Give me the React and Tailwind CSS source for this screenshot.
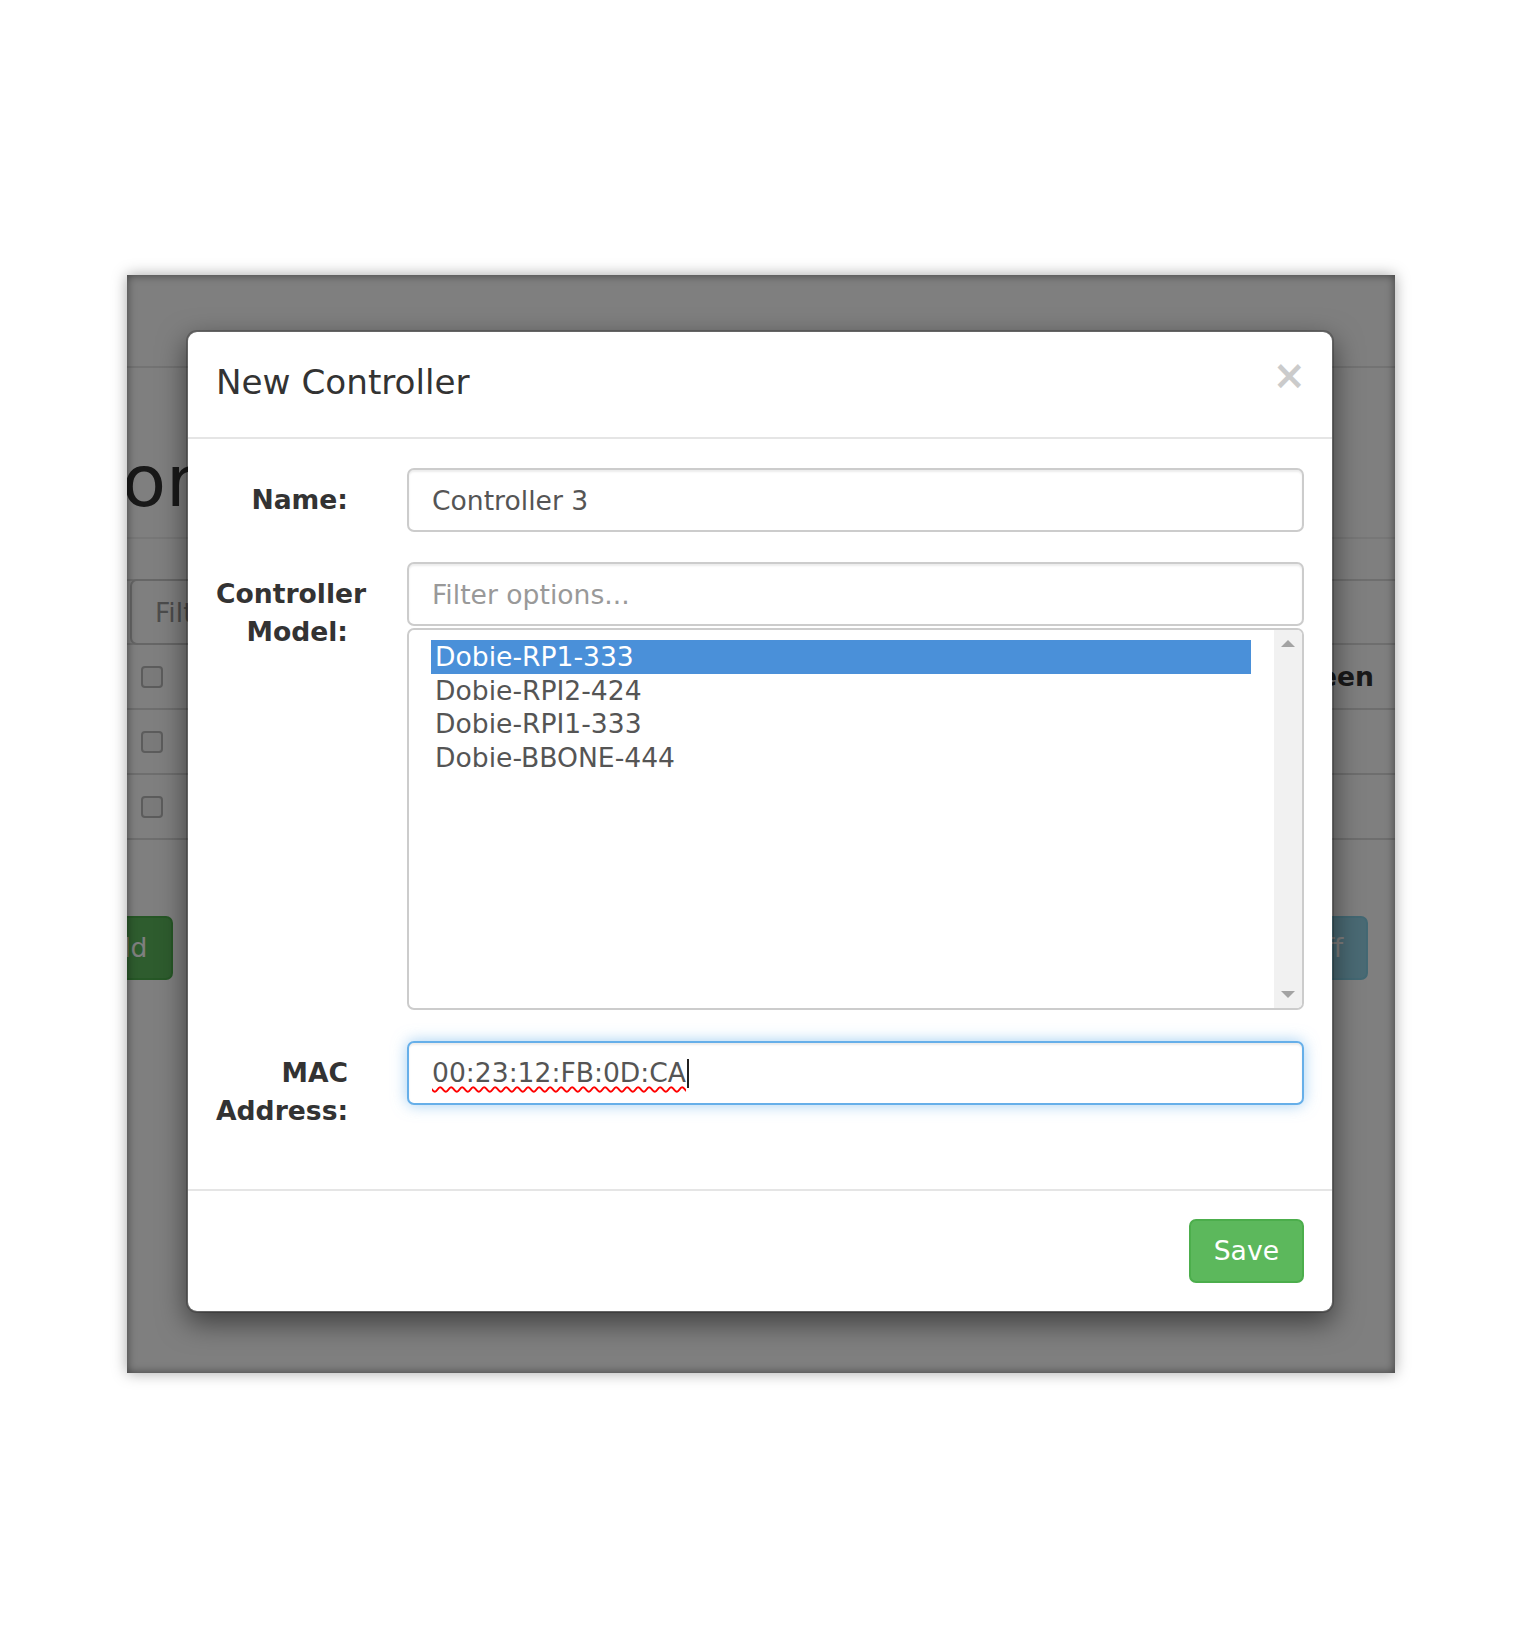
import React from "react";

const inputBase =
  "w-full rounded-[7px] border-2 border-[#ccc] bg-white px-[23px] text-[26.6px] text-[#555] shadow-[inset_0_2px_2px_rgba(0,0,0,0.075)] outline-none";

const models = ["Dobie-RP1-333", "Dobie-RPI2-424", "Dobie-RPI1-333", "Dobie-BBONE-444"];

function ScrollArrow({ up }) {
  return (
    <svg width="14" height="7" viewBox="0 0 14 7" className="block">
      <path d={up ? "M0 7 L7 0 L14 7 Z" : "M0 0 L7 7 L14 0 Z"} fill="#a3a3a3" />
    </svg>
  );
}

function BackgroundPage() {
  return (
    <div className="text-[#333]">
      {/* navbar */}
      <div className="h-[93px] border-b-2 border-[#e7e7e7]" />

      {/* page header */}
      <div className="flex h-[171px] items-end border-b-2 border-[#eee] pb-[20px]">
        <h1 className="-ml-[5px] text-[72px] font-normal leading-[72px]">or</h1>
      </div>

      {/* filter row */}
      <div className="mt-[40px] flex h-[66px] border-y-2 border-[#ddd]">
        <input
          readOnly
          placeholder="Filter"
          className="-mt-[2px] ml-[3px] h-[66px] w-[520px] rounded-[7px] border-2 border-[#ccc] bg-white px-[23px] text-[26.6px] outline-none placeholder:text-[#999]"
        />
      </div>

      {/* table rows */}
      {[true, false, false].map((head, i) => (
        <div
          key={i}
          className="flex h-[65px] items-center justify-between border-b-2 border-[#ddd] pl-[14px] pr-[21px]"
        >
          <span className="h-[22px] w-[22px] rounded-[4px] border-2 border-[#b8b8b8] bg-[#f4f4f4]" />
          {head && <span className="text-[26.6px] font-bold">Last Seen</span>}
        </div>
      ))}

      {/* action buttons */}
      <div className="mt-[76px] -ml-[56px] flex w-[1297px] justify-between">
        <button className="h-[64px] rounded-[7px] border-2 border-[#4cae4c] bg-[#5cb85c] px-[23px] text-[26.6px] text-white">
          Add
        </button>
        <button className="h-[64px] rounded-[7px] border-2 border-[#46b8da] bg-[#5bc0de] px-[23px] text-[26.6px] text-white opacity-65">
          Turn Off
        </button>
      </div>
    </div>
  );
}

function Modal() {
  return (
    <div className="absolute left-[59px] top-[55px] w-[1148px] rounded-[11px] border-2 border-black/20 bg-white bg-clip-padding text-[#333] shadow-[0_10px_28px_rgba(0,0,0,0.5)]">
      {/* Header */}
      <div className="flex items-start justify-between border-b-2 border-[#e5e5e5] pl-[28px] pr-[26px] pt-[26px] pb-[30px]">
        <h4 className="text-[34.2px] font-normal leading-[49px]">New Controller</h4>
        <button className="-mt-[3px] text-[40px] font-bold leading-[40px] text-black opacity-20">×</button>
      </div>

      {/* Body */}
      <div className="flex flex-col pl-[28px] pr-[28px] pt-[29px] pb-[59px] text-[26.6px]">
        <div className="mb-[30px] flex gap-[59px]">
          <label className="w-[132px] shrink-0 pt-[13px] text-right font-bold leading-[38px]">Name:</label>
          <input readOnly value="Controller 3" className={`${inputBase} h-[64px]`} />
        </div>

        <div className="mb-[31px] flex gap-[59px]">
          <label className="w-[132px] shrink-0 pt-[13px] text-right font-bold leading-[38px]">
            Controller Model:
          </label>
          <div className="flex min-w-0 flex-1 flex-col">
            <input
              readOnly
              placeholder="Filter options..."
              className={`${inputBase} h-[64px] placeholder:text-[#999]`}
            />
            <div className="mt-[2px] flex h-[382px] overflow-hidden rounded-[7px] border-2 border-[#ccc] bg-white">
              <div className="flex-1 pl-[22px] pr-[23px] pt-[10px]">
                {models.map((m, i) => (
                  <div
                    key={m}
                    className={`h-[33.6px] pl-[4px] text-[26.6px] leading-[33.6px] ${
                      i === 0 ? "bg-[#4a90d9] text-white" : "text-[#555]"
                    }`}
                  >
                    {m}
                  </div>
                ))}
              </div>
              <div className="flex w-[28px] flex-col items-center justify-between bg-[#f1f1f1] py-[10px]">
                <ScrollArrow up />
                <ScrollArrow />
              </div>
            </div>
          </div>
        </div>

        <div className="flex gap-[59px]">
          <label className="w-[132px] shrink-0 pt-[13px] text-right font-bold leading-[38px]">MAC Address:</label>
          <div className="flex h-[64px] flex-1 items-center rounded-[7px] border-2 border-[#66afe9] bg-white px-[23px] text-[#555] shadow-[inset_0_2px_2px_rgba(0,0,0,0.075),0_0_15px_rgba(102,175,233,0.6)]">
            <span className="underline decoration-[#ff0000] decoration-wavy decoration-[1.5px] underline-offset-[4px]">
              00:23:12:FB:0D:CA
            </span>
            <span className="ml-[1px] h-[29px] w-[2px] bg-[#222]" />
          </div>
        </div>
      </div>

      {/* Footer */}
      <div className="flex justify-end border-t-2 border-[#e5e5e5] pl-[28px] pr-[28px] pt-[28px] pb-[28px]">
        <button className="h-[64px] rounded-[7px] border-2 border-[#4cae4c] bg-[#5cb85c] px-[23px] text-[26.6px] text-white">
          Save
        </button>
      </div>
    </div>
  );
}

export default function App() {
  return (
    <div className="min-h-[1649px] bg-white pl-[127px] pt-[275px] font-['DejaVu_Sans',sans-serif]">
      <div className="relative h-[1098px] w-[1268px] overflow-hidden bg-white shadow-[0_0_14px_rgba(0,0,0,0.35)]">
        <BackgroundPage />
        <div className="absolute inset-0 bg-black/50 shadow-[inset_0_0_10px_rgba(0,0,0,0.5)]" />
        <Modal />
      </div>
    </div>
  );
}
